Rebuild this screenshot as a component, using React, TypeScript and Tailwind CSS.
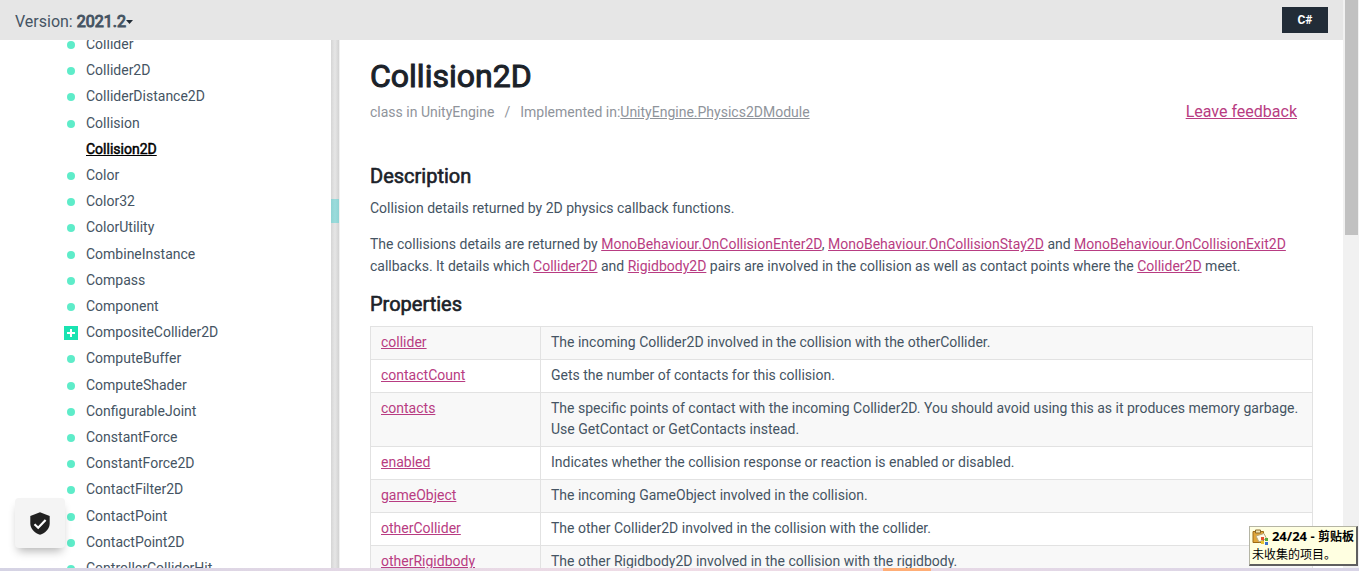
import type { ReactNode } from "react";

type Entry = { name: string; kind?: "current" | "group" };

const entries: Entry[] = [
  { name: "Collider" },
  { name: "Collider2D" },
  { name: "ColliderDistance2D" },
  { name: "Collision" },
  { name: "Collision2D", kind: "current" },
  { name: "Color" },
  { name: "Color32" },
  { name: "ColorUtility" },
  { name: "CombineInstance" },
  { name: "Compass" },
  { name: "Component" },
  { name: "CompositeCollider2D", kind: "group" },
  { name: "ComputeBuffer" },
  { name: "ComputeShader" },
  { name: "ConfigurableJoint" },
  { name: "ConstantForce" },
  { name: "ConstantForce2D" },
  { name: "ContactFilter2D" },
  { name: "ContactPoint" },
  { name: "ContactPoint2D" },
  { name: "ControllerColliderHit" },
];

const properties: [string, string][] = [
  ["collider", "The incoming Collider2D involved in the collision with the otherCollider."],
  ["contactCount", "Gets the number of contacts for this collision."],
  [
    "contacts",
    "The specific points of contact with the incoming Collider2D. You should avoid using this as it produces memory garbage. Use GetContact or GetContacts instead.",
  ],
  ["enabled", "Indicates whether the collision response or reaction is enabled or disabled."],
  ["gameObject", "The incoming GameObject involved in the collision."],
  ["otherCollider", "The other Collider2D involved in the collision with the collider."],
  ["otherRigidbody", "The other Rigidbody2D involved in the collision with the rigidbody."],
];

function DocLink({ children }: { children: ReactNode }) {
  return (
    <a href="#" className="text-[#b83c82] underline">
      {children}
    </a>
  );
}

function Marker({ kind }: { kind?: Entry["kind"] }) {
  if (kind === "current") return <span className="w-3.5 shrink-0" />;
  if (kind === "group")
    return (
      <button aria-label="Expand" className="mt-0.5 size-3.5 shrink-0 bg-[#19e3b1]">
        <svg viewBox="0 0 14 14" className="size-3.5">
          <path d="M7 3v8M3 7h8" stroke="#fff" strokeWidth="2" />
        </svg>
      </button>
    );
  return (
    <span className="flex w-3.5 shrink-0 justify-center pt-0.5">
      <span className="size-2 rounded-full bg-[#5eecc9]" />
    </span>
  );
}

function Header() {
  return (
    <header className="flex h-10 shrink-0 items-center justify-between bg-[#e6e6e6] pr-[15px] pl-[15px]">
      <button className="flex items-center pt-1 text-base text-[#455463]">
        Version:&nbsp;
        <span className="[-webkit-text-stroke:1px_#455463]">2021.2</span>
        <svg viewBox="0 0 7 4" className="h-1 w-[7px]">
          <path d="M0 0h7L3.5 4z" fill="#222c37" />
        </svg>
      </button>
      <button className="h-[26px] w-[46px] bg-[#222c37] text-xs font-bold text-white">C#</button>
    </header>
  );
}

function Sidebar() {
  return (
    <nav className="w-[331px] shrink-0 overflow-hidden">
      <ul className="-mt-[9px] grid h-[calc(100%+22px)] auto-rows-fr pl-16">
        {entries.map(({ name, kind }) => (
          <li key={name} className="flex min-h-0 items-center gap-2">
            <Marker kind={kind} />
            <a
              href="#"
              className={
                kind === "current"
                  ? "text-sm text-black underline [-webkit-text-stroke:0.5px_#000]"
                  : "text-sm text-[#455463]"
              }
            >
              {name}
            </a>
          </li>
        ))}
      </ul>
    </nav>
  );
}

function Splitter() {
  return (
    <div className="w-[9px] shrink-0 border-r border-[#f0f0f0] bg-linear-to-r from-[#d5d5d5] via-[#e6e6e6] to-[#d2d2d2] pt-[159px]">
      <div className="h-6 bg-linear-to-r from-[#8fd3d3] via-[#9bdcdc] to-[#8fd3d3]" />
    </div>
  );
}

function SectionTitle({ children }: { children: ReactNode }) {
  return (
    <h2 className="text-xl leading-6 text-[#1b2229] [-webkit-text-stroke:0.6px_#1b2229]">
      {children}
    </h2>
  );
}

function Content() {
  return (
    <main className="min-w-0 flex-1 overflow-hidden px-[30px] pt-4 text-sm text-[#455463]">
      <h1 className="text-[32px] leading-10 text-[#1b2229] [-webkit-text-stroke:1px_#1b2229]">
        Collision2D
      </h1>
      <div className="flex h-8 items-baseline justify-between pt-1 text-[#8f949b]">
        <p>
          class in UnityEngine<span className="px-2.5">/</span>Implemented in:
          <a href="#" className="underline">
            UnityEngine.Physics2DModule
          </a>
        </p>
        <a href="#" className="mr-4 text-base text-[#b83c82] underline">
          Leave feedback
        </a>
      </div>
      <div className="mt-9">
        <SectionTitle>Description</SectionTitle>
      </div>
      <p className="mt-[9px] leading-[22px]">Collision details returned by 2D physics callback functions.</p>
      <p className="mt-3.5 leading-[22px]">
        The collisions details are returned by <DocLink>MonoBehaviour.OnCollisionEnter2D</DocLink>,{" "}
        <DocLink>MonoBehaviour.OnCollisionStay2D</DocLink> and{" "}
        <DocLink>MonoBehaviour.OnCollisionExit2D</DocLink> callbacks. It details which{" "}
        <DocLink>Collider2D</DocLink> and <DocLink>Rigidbody2D</DocLink> pairs are involved in the
        collision as well as contact points where the <DocLink>Collider2D</DocLink> meet.
      </p>
      <div className="mt-[15px]">
        <SectionTitle>Properties</SectionTitle>
      </div>
      <table className="mt-2.5 w-full table-fixed border-collapse leading-[21px]">
        <colgroup>
          <col className="w-[170px]" />
          <col />
        </colgroup>
        <tbody>
          {properties.map(([name, text]) => (
            <tr key={name} className="align-top odd:bg-[#f8f8f8]">
              <td className="border border-[#e2e2e2] px-2.5 pt-[5px] pb-1.5">
                <DocLink>{name}</DocLink>
              </td>
              <td className="border border-[#e2e2e2] px-2.5 pt-[5px] pb-1.5">{text}</td>
            </tr>
          ))}
        </tbody>
      </table>
    </main>
  );
}

function PrivacyButton() {
  return (
    <button
      aria-label="Privacy settings"
      className="absolute bottom-[23px] left-[15px] flex size-[50px] items-center justify-center rounded bg-[#f4f4f4] shadow-[0_6px_10px_-3px_rgba(0,0,0,0.3)]"
    >
      <svg viewBox="0 0 20 23" className="h-[23px] w-5">
        <path d="M10 0.3 19.7 4v7.2c0 5.4-4 9.7-9.7 11.5C4.3 20.9 0.3 16.6 0.3 11.2V4z" fill="#212121" />
        <path d="M4.500 12.200 8.200 15.700 15.600 8" fill="none" stroke="#fff" strokeWidth="2.2" />
      </svg>
    </button>
  );
}

function ClipboardTip() {
  return (
    <div
      role="status"
      className="absolute right-px bottom-[5px] border border-r-2 border-b-2 border-[#b5b5a5] border-r-[#5f5f5f] border-b-[#5f5f5f] bg-[#ffffe1] px-0.5 font-['Open_Sans','Noto_Sans_CJK_SC',sans-serif] text-xs leading-[18px] text-black"
    >
      <p className="flex items-center gap-1 font-bold whitespace-pre">
        <svg viewBox="0 0 16 16" className="size-4">
          <path d="M1 2.500h10.500v11H1z" fill="#e0a63a" stroke="#9c6a16" />
          <path d="M3.500 1h5v3h-5z" fill="#f2e3b0" stroke="#8a6a2a" />
          <path d="M4 7 12 4.500l2.500 5L7 13z" fill="#fffbe8" stroke="#b7a77a" />
          <path d="M9 8h3v3H9z" fill="#e5502c" />
          <path d="M13 9h3v3h-3z" fill="#58a83c" />
          <path d="M9 12h3v3H9z" fill="#e9c32b" />
          <path d="M13 13h3v3h-3z" fill="#3b73cc" />
        </svg>
        <span>
          <span className="text-[13px]">24/24 - </span>剪贴板
        </span>
      </p>
      <p>未收集的项目。</p>
    </div>
  );
}

export default function App() {
  return (
    <div className="relative flex h-screen flex-col overflow-hidden bg-white font-['Roboto','Noto_Sans_CJK_SC',sans-serif]">
      <div className="flex min-h-0 flex-1">
        <div className="flex min-w-0 flex-1 flex-col">
          <Header />
          <div className="flex min-h-0 flex-1">
            <Sidebar />
            <Splitter />
            <Content />
          </div>
        </div>
        <div className="w-4 shrink-0 bg-[#f1f1f1] pr-px pl-0.5">
          <div className="h-[235px] bg-[#c1c1c1]" />
        </div>
      </div>
      <div className="flex h-[3px] shrink-0 bg-linear-to-r from-[#d5d3e4] via-[#f0dce6] to-[#d8d4e6]">
        <div className="w-[65%]" />
        <div className="w-12 bg-[#ffae77]" />
      </div>
      <PrivacyButton />
      <ClipboardTip />
    </div>
  );
}
